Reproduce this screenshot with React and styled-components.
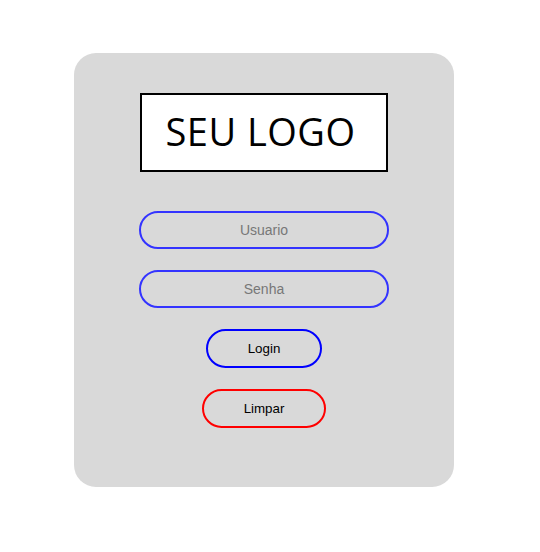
import React from "react";
import styled, { createGlobalStyle } from "styled-components";

const GlobalStyle = createGlobalStyle`
  body {
    margin: 0;
    background: #ffffff;
    font-family: "Liberation Sans", Arial, sans-serif;
  }
`;

const App = () => {
  return (
    <>
      <GlobalStyle />
      <Page>
        <Card>
          <Logo>SEU LOGO</Logo>
          <Form onSubmit={(e) => e.preventDefault()}>
            <Field type="text" placeholder="Usuario" />
            <Field type="password" placeholder="Senha" />
            <Button type="submit" color="#0000ff">Login</Button>
            <Button type="reset" color="#ff0000">Limpar</Button>
          </Form>
        </Card>
      </Page>
    </>
  );
};

export default App;

const Page = styled.div`
  padding: 53px 0 0 74px;
`;
const Card = styled.div`
  width: 380px;
  height: 434px;
  box-sizing: border-box;
  padding-top: 40px;
  background: #d9d9d9;
  border-radius: 22px;
  display: flex;
  flex-direction: column;
  align-items: center;
`;
const Logo = styled.div`
  width: 248px;
  height: 79px;
  box-sizing: border-box;
  border: 2px solid #000;
  background: #fff;
  display: flex;
  align-items: center;
  justify-content: center;
  padding: 0 7px 4px 0;
  font-family: "Open Sans", sans-serif;
  font-size: 38px;
  letter-spacing: 0.5px;
  color: #000;
  margin-bottom: 39px;
`;
const Form = styled.form`
  display: flex;
  flex-direction: column;
  align-items: center;
  gap: 21px;
`;
const Field = styled.input`
  width: 250px;
  height: 38px;
  box-sizing: border-box;
  border: 2px solid #3333ff;
  border-radius: 19px;
  background: transparent;
  text-align: center;
  font-family: "Liberation Sans", Arial, sans-serif;
  font-size: 14px;
  outline: none;
  &::placeholder {
    color: #777;
  }
`;
const Button = styled.button`
  height: 39px;
  box-sizing: border-box;
  padding: 0 40px;
  border: 2px solid ${({ color }) => color};
  border-radius: 20px;
  background: transparent;
  font-family: "Liberation Sans", Arial, sans-serif;
  font-size: 13.33px;
  color: #000;
  cursor: pointer;
`;
